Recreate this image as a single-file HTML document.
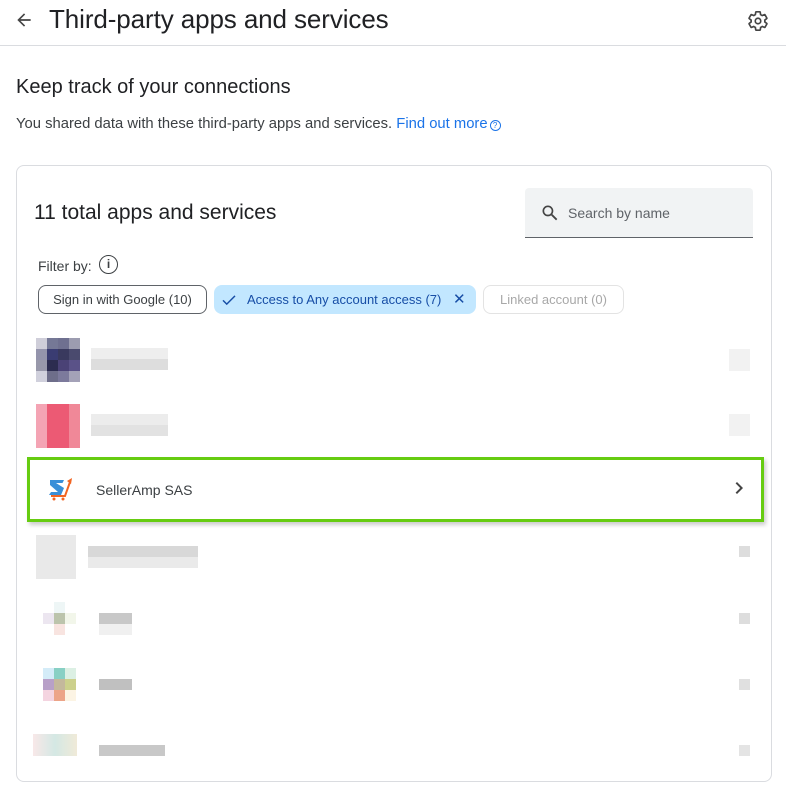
<!DOCTYPE html>
<html><head><style>
*{margin:0;padding:0;box-sizing:border-box}
body{width:786px;height:785px;background:#fff;font-family:"Liberation Sans",sans-serif;color:#202124;position:relative;overflow:hidden}
.a{position:absolute}
.px{position:absolute;width:11px;height:11px}
</style></head><body>
<svg class="a" style="left:14px;top:10px" width="20" height="20" viewBox="0 0 24 24"><path d="M20 11H7.8l5.6-5.6L12 4l-8 8 8 8 1.4-1.4L7.8 13H20z" fill="#444"/></svg>
<div class="a" style="left:49px;top:4px;font-size:26px;color:#202124;letter-spacing:-0.1px">Third-party apps and services</div>
<svg class="a" style="left:747px;top:10px" width="22" height="22" viewBox="0 0 24 24"><path fill="none" stroke="#444" stroke-width="1.8" d="M19.4 13c.04-.33.06-.66.06-1s-.02-.67-.06-1l2.1-1.65c.2-.15.24-.42.12-.64l-2-3.46c-.12-.22-.39-.3-.61-.22l-2.5 1c-.52-.4-1.08-.73-1.69-.98l-.38-2.65A.49.49 0 0 0 14 2h-4c-.25 0-.46.18-.49.42l-.38 2.65c-.61.25-1.17.59-1.690.98l-2.49-1c-.23-.09-.49 0-.61.22l-2 3.46c-.13.22-.07.49.12.64L4.57 11c-.04.33-.07.67-.07 1s.03.67.07 1l-2.11 1.65c-.19.15-.24.42-.12.64l2 3.46c.12.22.39.3.61.22l2.49-1c.52.4 1.08.73 1.69.98l.38 2.65c.03.24.24.42.49.42h4c.25 0 .46-.18.49-.42l.38-2.65c.61-.25 1.17-.59 1.69-.98l2.49 1c.23.09.49 0 .61-.22l2-3.46c.12-.22.07-.49-.12-.64L19.4 13z"/><circle cx="12" cy="12" r="3" fill="none" stroke="#444" stroke-width="1.8"/></svg>
<div class="a" style="left:0;top:45px;width:786px;height:1px;background:#dadce0"></div>
<div class="a" style="left:16px;top:76px;font-size:20px">Keep track of your connections</div>
<div class="a" style="left:16px;top:116px;font-size:14.8px;color:#3c4043">You shared data with these third-party apps and services. <span style="color:#1a73e8">Find out more</span><span style="display:inline-block;width:11px;height:11px;border:1px solid #1a73e8;border-radius:50%;color:#1a73e8;font-size:8px;text-align:center;line-height:10px;margin-left:2px;vertical-align:0">?</span></div>
<div class="a" style="left:16px;top:165px;width:756px;height:617px;border:1px solid #dadce0;border-radius:8px"></div>
<div class="a" style="left:34px;top:201px;font-size:21px">11 total apps and services</div>
<div class="a" style="left:525px;top:188px;width:228px;height:50px;background:#f1f3f4;border-bottom:1px solid #5f6368;border-radius:4px 4px 0 0"></div>
<svg class="a" style="left:540px;top:203px" width="20" height="20" viewBox="0 0 24 24"><circle cx="9.5" cy="9.5" r="5.5" fill="none" stroke="#444" stroke-width="2"/><path d="M14 14l6 6" stroke="#444" stroke-width="2.2"/></svg>
<div class="a" style="left:568px;top:205px;font-size:14px;color:#5f6368">Search by name</div>
<div class="a" style="left:38px;top:258px;font-size:14px;color:#3c4043">Filter by:</div>
<div class="a" style="left:99px;top:255px;width:19px;height:19px;border:1.6px solid #3c4043;border-radius:50%;font-size:12px;text-align:center;line-height:16px;color:#3c4043;font-weight:bold">i</div>
<div class="a" style="left:38px;top:285px;width:169px;height:29px;border:1px solid #5f6368;border-radius:8px;font-size:13px;line-height:27px;text-align:center;color:#3c4043">Sign in with Google (10)</div>
<div class="a" style="left:214px;top:285px;width:262px;height:29px;background:#c2e7ff;border-radius:8px;font-size:13px;line-height:29px;color:#174ea6"><svg style="position:absolute;left:6px;top:6px" width="18" height="18" viewBox="0 0 24 24"><path d="M4 12.5l5 5L20 6.5" fill="none" stroke="#174ea6" stroke-width="2"/></svg><span style="position:absolute;left:33px">Access to Any account access (7)</span><span style="position:absolute;left:239px;font-size:15px">✕</span></div>
<div class="a" style="left:483px;top:285px;width:141px;height:29px;border:1px solid #e3e3e3;border-radius:8px;font-size:13px;line-height:27px;text-align:center;color:#a8a8a8">Linked account (0)</div>

<div class="px" style="left:36px;top:338px;background:#cfced9"></div><div class="px" style="left:47px;top:338px;background:#757896"></div><div class="px" style="left:58px;top:338px;background:#6f7090"></div><div class="px" style="left:69px;top:338px;background:#9c9cb0"></div>
<div class="px" style="left:36px;top:349px;background:#9494ac"></div><div class="px" style="left:47px;top:349px;background:#3a3c72"></div><div class="px" style="left:58px;top:349px;background:#39395e"></div><div class="px" style="left:69px;top:349px;background:#4a4a6e"></div>
<div class="px" style="left:36px;top:360px;background:#9898aa"></div><div class="px" style="left:47px;top:360px;background:#2c2c50"></div><div class="px" style="left:58px;top:360px;background:#4a4276"></div><div class="px" style="left:69px;top:360px;background:#5a5288"></div>
<div class="px" style="left:36px;top:371px;background:#d0d0dc"></div><div class="px" style="left:47px;top:371px;background:#6e6e8a"></div><div class="px" style="left:58px;top:371px;background:#7c7a9c"></div><div class="px" style="left:69px;top:371px;background:#a4a2b8"></div>
<div class="a" style="left:91px;top:348px;width:77px;height:22px;background:linear-gradient(#eee 50%,#ddd 50%)"></div>
<div class="a" style="left:729px;top:349px;width:21px;height:22px;background:#f2f2f2"></div>
<div class="a" style="left:36px;top:404px;width:44px;height:44px;background:linear-gradient(90deg,#f4a4b4 25%,#ec5a74 25%,#ec5a74 75%,#f08898 75%)"></div>
<div class="a" style="left:91px;top:414px;width:77px;height:22px;background:linear-gradient(#ececec 50%,#e2e2e2 50%)"></div>
<div class="a" style="left:729px;top:414px;width:21px;height:22px;background:#f2f2f2"></div>
<div class="a" style="left:27px;top:457px;width:737px;height:65px;border:3px solid #66cc11;background:#fff;box-shadow:2px 3px 4px rgba(0,0,0,.2)"></div>
<svg class="a" style="left:47px;top:477px" width="28" height="26" viewBox="0 0 28 26"><path d="M3 3h14l-1.5 3H9l8 5-3 7H2l2-3h7L3 8z" fill="#3a8fd8"/><path d="M4 19h14l5-14" fill="none" stroke="#f26522" stroke-width="2"/><path d="M20 4l5-3-1 6z" fill="#f26522"/><circle cx="7" cy="22" r="1.5" fill="#f26522"/><circle cx="16" cy="22" r="1.5" fill="#f26522"/></svg>
<div class="a" style="left:96px;top:482px;font-size:14px;color:#3c4043">SellerAmp SAS</div>
<svg class="a" style="left:727px;top:476px" width="24" height="24" viewBox="0 0 24 24"><path d="M8.6 16.6L13.2 12 8.6 7.4 10 6l6 6-6 6z" fill="#444"/></svg>
<div class="a" style="left:36px;top:535px;width:40px;height:44px;background:#e4e4e4;opacity:.8"></div>
<div class="a" style="left:88px;top:546px;width:110px;height:22px;background:linear-gradient(#d8d8d8 50%,#eaeaea 50%)"></div>
<div class="a" style="left:739px;top:546px;width:11px;height:11px;background:#ddd"></div>
<div class="px" style="left:54px;top:602px;background:#eef6f6"></div><div class="px" style="left:43px;top:613px;background:#ece6f0"></div><div class="px" style="left:54px;top:613px;background:#bcc4ac"></div><div class="px" style="left:65px;top:613px;background:#f2f6ea"></div><div class="px" style="left:54px;top:624px;background:#f8e4e0"></div>
<div class="a" style="left:99px;top:613px;width:33px;height:11px;background:#c8c8c8"></div><div class="a" style="left:99px;top:624px;width:33px;height:11px;background:#f0f0f0"></div>
<div class="a" style="left:739px;top:613px;width:11px;height:11px;background:#ddd"></div>
<div class="px" style="left:43px;top:668px;background:#d4ecf8"></div><div class="px" style="left:54px;top:668px;background:#88d0c4"></div><div class="px" style="left:65px;top:668px;background:#dcf0e4"></div>
<div class="px" style="left:43px;top:679px;background:#b8a0c8"></div><div class="px" style="left:54px;top:679px;background:#c4b89c"></div><div class="px" style="left:65px;top:679px;background:#ccd08c"></div>
<div class="px" style="left:43px;top:690px;background:#f4d4e0"></div><div class="px" style="left:54px;top:690px;background:#eca488"></div><div class="px" style="left:65px;top:690px;background:#fcf4e4"></div>
<div class="a" style="left:99px;top:679px;width:33px;height:11px;background:#c0c0c0"></div>
<div class="a" style="left:739px;top:679px;width:11px;height:11px;background:#e0e0e0"></div>
<div class="a" style="left:33px;top:734px;width:44px;height:22px;background:linear-gradient(90deg,#f8e8e8,#d4e8e4,#f0ead8)"></div>
<div class="a" style="left:99px;top:745px;width:66px;height:11px;background:#c8c8c8"></div>
<div class="a" style="left:739px;top:745px;width:11px;height:11px;background:#e4e4e4"></div>
</body></html>
